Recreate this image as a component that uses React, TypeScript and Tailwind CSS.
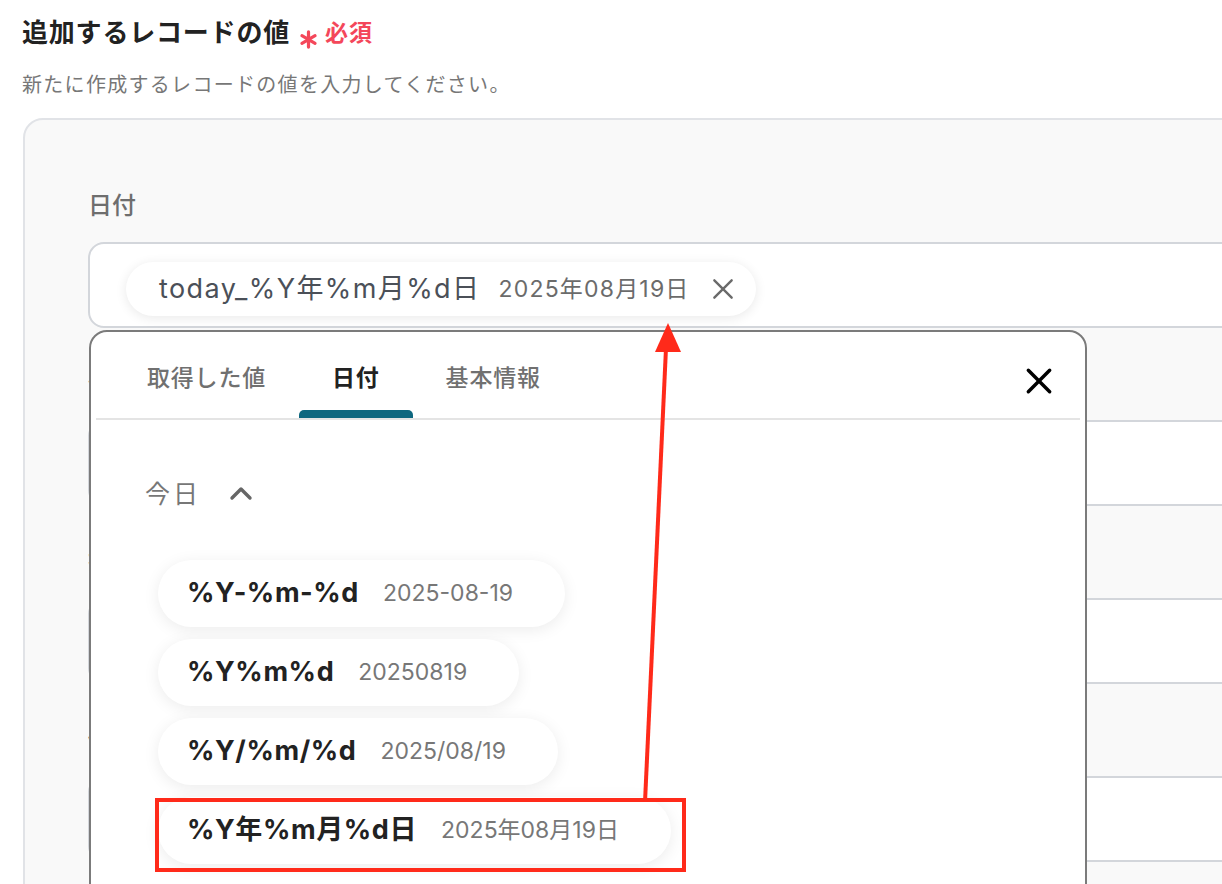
import React from 'react';

// Date format options shown in the 日付 tab
const formats = [
  { key: '%Y-%m-%d', sample: '2025-08-19' },
  { key: '%Y%m%d', sample: '20250819' },
  { key: '%Y/%m/%d', sample: '2025/08/19' },
  { key: '%Y年%m月%d日', sample: '2025年08月19日' },
];

const tabs = ['取得した値', '日付', '基本情報'];

function XIcon({ className, strokeWidth = 2.5 }: { className?: string; strokeWidth?: number }) {
  return (
    <svg viewBox="0 0 24 24" className={className} fill="none" stroke="currentColor" strokeWidth={strokeWidth} strokeLinecap="round">
      <path d="M4 4L20 20M20 4L4 20" />
    </svg>
  );
}

function Field({ label, first, children }: { label: string; first?: boolean; children?: React.ReactNode }) {
  return (
    <div className={first ? '' : 'mt-[40px]'}>
      <div className="h-[32px] text-[24px] leading-[32px] font-medium text-[#6e6e6e]">{label}</div>
      <div className="mt-[20px] h-[86px] rounded-[16px] border-2 border-[#d3d6db] bg-white pl-[36px] pt-[18px]">
        {children}
      </div>
    </div>
  );
}

export default function App() {
  return (
    <div className="relative h-[884px] w-[1222px] overflow-hidden bg-white font-[Inter,'Noto_Sans_CJK_JP',sans-serif]">
      {/* Header */}
      <div className="pl-[22px] pt-[14px]">
        <div className="flex h-[38px] items-center">
          <h1 className="text-[26px] leading-[38px] font-bold text-[#222] tracking-[0.8px]">追加するレコードの値</h1>
          <svg viewBox="0 0 20 20" className="ml-[9px] mt-[12px] h-[19px] w-[19px] text-[#f4475a]" fill="none" stroke="currentColor" strokeWidth={3.4} strokeLinecap="round">
            <path d="M10 2V18M3.1 6L16.9 14M16.9 6L3.1 14" />
          </svg>
          <span className="ml-[7px] text-[23px] leading-[38px] font-bold tracking-[1px] text-[#f4475a]">必須</span>
        </div>
        <p className="mt-[18px] text-[20px] leading-[30px] tracking-[1.3px] text-[#777]">
          新たに作成するレコードの値を入力してください。
        </p>

        {/* Card with fields */}
        <div className="ml-[1px] mt-[18px] w-[1260px] rounded-[20px] border-2 border-[#e1e3e7] bg-[#f9f9f9] pl-[63px] pt-[70px] pb-[40px]">
          <Field label="日付" first>
            <div className="inline-flex h-[54px] items-center rounded-full bg-white pl-[33px] pr-[20px] shadow-[0_2px_12px_rgba(0,0,0,0.09)]">
              <span className="text-[27px] tracking-[1.4px] text-[#4b5058]">today_%Y年%m月%d日</span>
              <span className="ml-[18px] text-[23px] tracking-[1.2px] text-[#6b6b6b]">2025年08月19日</span>
              <XIcon className="ml-[20px] h-[26px] w-[26px] text-[#6a6a6a]" strokeWidth={2.2} />
            </div>
          </Field>
          <Field label="件名" />
          <Field label="担当者" />
          <Field label="備考" />
        </div>
      </div>

      {/* Variable picker popup */}
      <div className="absolute left-[89px] top-[330px] h-[600px] w-[998px] rounded-[18px] border-2 border-[#7b7b7b] bg-white px-[5px]">
        <div className="flex h-[86px] pl-[18px]">
          {tabs.map((t) => {
            const active = t === '日付';
            return (
              <div key={t} className="flex flex-col items-center pt-[30px]">
                <span className={`px-[33px] text-[23px] leading-[32px] tracking-[0.8px] ${active ? 'font-bold text-[#222]' : 'font-medium text-[#707070]'}`}>{t}</span>
                <div className={`mt-[16px] h-[8px] w-full rounded-t-[5px] ${active ? 'bg-[#0e677f]' : ''}`} />
              </div>
            );
          })}
        </div>
        <div className="h-[2px] bg-[#e4e4e4]" />
        <XIcon className="absolute right-[30px] top-[33px] h-[32px] w-[32px] text-black" strokeWidth={2.6} />

        <div className="pl-[49px] pt-[58px]">
          <div className="flex h-[32px] items-center">
            <span className="text-[25px] leading-[32px] tracking-[3px] text-[#777]">今日</span>
            <svg viewBox="0 0 24 24" className="ml-[28px] h-[24px] w-[24px] text-[#666]" fill="none" stroke="currentColor" strokeWidth={3.4} strokeLinecap="round" strokeLinejoin="round">
              <path d="M3 16L12 7L21 16" />
            </svg>
          </div>
          <div className="mt-[50px] flex flex-col items-start gap-[12px] pl-[13px]">
            {formats.map((f) => (
              <div key={f.key} className="flex h-[67px] items-center gap-[24px] rounded-full bg-white pl-[29px] pr-[52px] shadow-[0_3px_16px_rgba(0,0,0,0.08)]">
                <span className="text-[27px] font-bold tracking-[0.6px] text-[#222]">{f.key}</span>
                <span className="text-[23px] text-[#777]">{f.sample}</span>
              </div>
            ))}
          </div>
        </div>
      </div>

      {/* Annotation: highlight box + arrow */}
      <div className="absolute left-[155px] top-[798px] h-[74px] w-[531px] border-[4px] border-[#ff2a1a]" />
      <svg className="pointer-events-none absolute left-0 top-0 h-[884px] w-[1222px]" viewBox="0 0 1222 884">
        <line x1="645" y1="802" x2="666" y2="348" stroke="#ff2a1a" strokeWidth="4" />
        <polygon points="668,323 655,352 681,352" fill="#ff2a1a" />
      </svg>
    </div>
  );
}
